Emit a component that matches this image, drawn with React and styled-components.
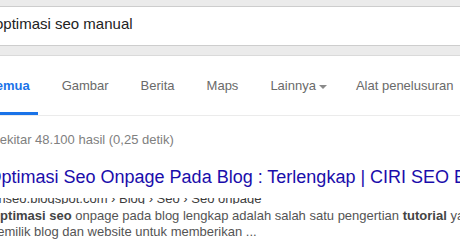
import styled, { createGlobalStyle } from "styled-components";

const GlobalStyle = createGlobalStyle`
  html, body {
    margin: 0;
    padding: 0;
    background: #fff;
    overflow: hidden;
  }
  body {
    font-family: "Liberation Sans", Arial, sans-serif;
  }
`;

const tabs = [
  { label: "Semua", active: true },
  { label: "Gambar" },
  { label: "Berita" },
  { label: "Maps" },
  { label: "Lainnya", menu: true },
  { label: "Alat penelusuran" },
];

function App() {
  return (
    <Page>
      <GlobalStyle />
      <Header>
        <SearchBox>
          <SearchText>optimasi seo manual</SearchText>
        </SearchBox>
      </Header>

      <TabBar>
        {tabs.map((t) => (
          <Tab key={t.label} $active={t.active}>
            {t.label}
            {t.menu && <Caret />}
          </Tab>
        ))}
      </TabBar>

      <Results>
        <Stats>Sekitar 48.100 hasil (0,25 detik)</Stats>
        <Result>
          <Title>Optimasi Seo Onpage Pada Blog : Terlengkap | CIRI SEO BLOG</Title>
          <CiteClip>
            <Cite>ciriseo.blogspot.com › Blog › Seo › Seo onpage</Cite>
          </CiteClip>
          <Snippet>
            <Line>
              <b>Optimasi seo</b> onpage pada blog lengkap adalah salah satu pengertian{" "}
              <b>tutorial</b> yang
            </Line>
            <Line>pemilik blog dan website untuk memberikan ...</Line>
          </Snippet>
        </Result>
      </Results>
    </Page>
  );
}

const Page = styled.div`
  width: 460px;
  height: 241px;
  overflow: hidden;
  background: #fff;
`;

const Header = styled.div`
  background: #ebebeb;
  padding: 6px 0 9px;
  border-bottom: 1px solid #dadada;
`;

const SearchBox = styled.div`
  height: 38px;
  background: #fff;
  border-top: 1px solid #cdcdcd;
  border-bottom: 1px solid #cdcdcd;
  font-size: 15px;
  line-height: 34px;
  color: #222;
  white-space: nowrap;
`;

const SearchText = styled.span`
  display: block;
  margin-left: -5px;
`;

const TabBar = styled.div`
  display: flex;
  align-items: flex-end;
  padding-top: 22px;
  margin-left: -21px;
  border-bottom: 1px solid #ebebeb;
  white-space: nowrap;
`;

const Tab = styled.div`
  display: flex;
  align-items: center;
  padding: 0 8px 18px;
  margin-right: 16px;
  font-size: 13px;
  line-height: 16px;
  color: ${(p) => (p.$active ? "#1a73e8" : "#6a6a6a")};
  font-weight: ${(p) => (p.$active ? "bold" : "normal")};
  border-bottom: 3px solid ${(p) => (p.$active ? "#1a73e8" : "transparent")};
`;

const Caret = styled.span`
  display: inline-block;
  width: 0;
  height: 0;
  margin-left: 3px;
  margin-right: -3px;
  margin-top: 2px;
  border-left: 4px solid transparent;
  border-right: 4px solid transparent;
  border-top: 4px solid #8a8a8a;
`;

const Results = styled.div`
  margin-left: -9px;
  padding-top: 16px;
  white-space: nowrap;
`;

const Stats = styled.div`
  font-size: 13px;
  line-height: 16px;
  color: #808080;
`;

const Result = styled.div`
  margin-top: 18px;
`;

const Title = styled.div`
  margin-left: -3.5px;
  font-size: 18px;
  line-height: 22px;
  color: #1a0dab;
`;

const CiteClip = styled.div`
  margin-top: 10px;
  height: 6px;
  overflow: hidden;
`;

const Cite = styled.div`
  margin-top: -7px;
  margin-left: -2px;
  font-size: 13px;
  line-height: 16px;
  color: #3c3c3c;
`;

const Snippet = styled.div`
  margin-top: 4px;
  margin-left: -1px;
  font-size: 13px;
  line-height: 16px;
  color: #545454;

  & b {
    color: #444;
  }
`;

const Line = styled.div``;

export default App;
